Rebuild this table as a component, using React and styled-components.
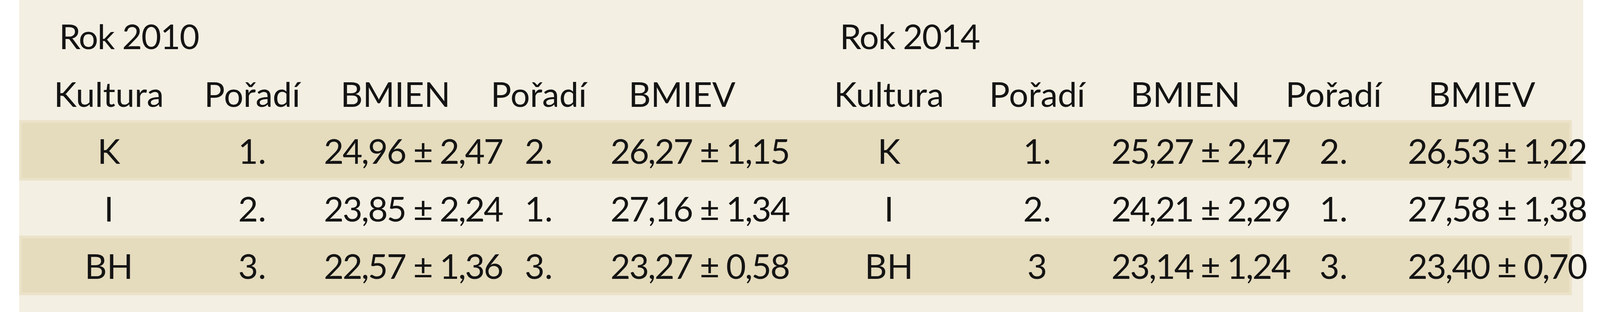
import styled, { createGlobalStyle } from "styled-components";

const GlobalStyle = createGlobalStyle`
  html, body {
    margin: 0;
    padding: 0;
    background: #ffffff;
  }
  body {
    font-family: Lato, "Open Sans", sans-serif;
    overflow: hidden;
  }
`;

// column tracks, proportional so the table always fits the window
const COLUMNS = [
  "minmax(0, 50fr)",
  "repeat(5, minmax(0, 466fr))",
  "minmax(0, 199fr)",
  "repeat(5, minmax(0, 482fr))",
  "minmax(0, 43fr)",
].join(" ");

const HEADERS = ["Kultura", "Pořadí", "BMIEN", "Pořadí", "BMIEV"];

const ROWS = [
  {
    band: true,
    height: 155,
    y2010: ["K", "1.", "24,96 ± 2,47", "2.", "26,27 ± 1,15"],
    y2014: ["K", "1.", "25,27 ± 2,47", "2.", "26,53 ± 1,22"],
  },
  {
    band: false,
    height: 141,
    y2010: ["I", "2.", "23,85 ± 2,24", "1.", "27,16 ± 1,34"],
    y2014: ["I", "2.", "24,21 ± 2,29", "1.", "27,58 ± 1,38"],
  },
  {
    band: true,
    height: 153,
    y2010: ["BH", "3.", "22,57 ± 1,36", "3.", "23,27 ± 0,58"],
    y2014: ["BH", "3", "23,14 ± 1,24", "3.", "23,40 ± 0,70"],
  },
];

const Panel = styled.div`
  margin: 0 43px 0 49px;
  height: 800px;
  box-sizing: border-box;
  padding-right: 29px;
  background: #f3efe2;
`;

const Row = styled.div`
  display: grid;
  grid-template-columns: ${COLUMNS};
  align-items: center;
  box-sizing: border-box;
  height: ${(p) => p.$height}px;
  padding-bottom: ${(p) => p.$pb || 0}px;
  border: 7px solid ${(p) => (p.$band ? "#ebe2c9" : "transparent")};
  background: ${(p) => (p.$band ? "#e5dbbd" : "transparent")};
`;

const Title = styled.div`
  grid-column: ${(p) => p.$col} / span 5;
  padding-left: ${(p) => p.$indent}px;
  font-size: 88px;
  line-height: 88px;
  letter-spacing: -2px;
  color: #141414;
  white-space: nowrap;
`;

const Cell = styled.div`
  grid-column: ${(p) => p.$col};
  text-align: center;
  font-size: 88px;
  line-height: 88px;
  letter-spacing: ${(p) => (p.$num ? "-3px" : "0")};
  color: #141414;
  white-space: nowrap;
`;

const cols2010 = [2, 3, 4, 5, 6];
const cols2014 = [8, 9, 10, 11, 12];

const Cells = ({ values, cols }) =>
  values.map((v, i) => (
    <Cell key={cols[i]} $col={cols[i]} $num={v.includes("±")}>
      {v}
    </Cell>
  ));

const App = () => {
  return (
    <>
      <GlobalStyle />
      <Panel>
        <Row $height={184}>
          <Title $col={2} $indent={56}>Rok 2010</Title>
          <Title $col={8} $indent={64}>Rok 2014</Title>
        </Row>
        <Row $height={124} $pb={13}>
          <Cells values={HEADERS} cols={cols2010} />
          <Cells values={HEADERS} cols={cols2014} />
        </Row>
        {ROWS.map((r, i) => (
          <Row key={i} $band={r.band} $height={r.height}>
            <Cells values={r.y2010} cols={cols2010} />
            <Cells values={r.y2014} cols={cols2014} />
          </Row>
        ))}
      </Panel>
    </>
  );
};

export default App;
